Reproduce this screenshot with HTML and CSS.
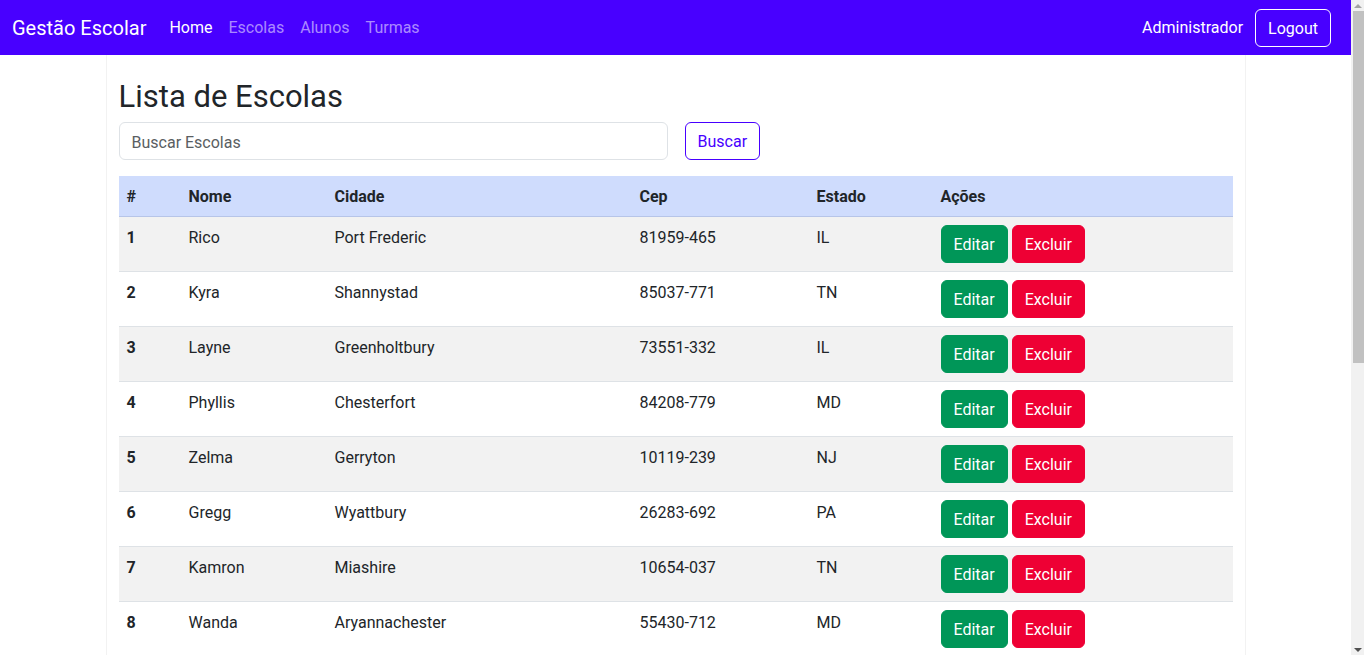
FILE: index.html
```html
<!DOCTYPE html>
<html lang="pt-BR">
<head>
<meta charset="utf-8">
<title>Gestão Escolar</title>
<link rel="stylesheet" href="styles.css">
</head>
<body>
<div class="page">
  <nav class="navbar">
    <div class="nav-left">
      <a class="brand" href="#">Gestão Escolar</a>
      <ul class="nav-links">
        <li><a class="nav-link active" href="#">Home</a></li>
        <li><a class="nav-link" href="#">Escolas</a></li>
        <li><a class="nav-link" href="#">Alunos</a></li>
        <li><a class="nav-link" href="#">Turmas</a></li>
      </ul>
    </div>
    <div class="nav-right">
      <span class="user">Administrador</span>
      <button class="btn btn-logout">Logout</button>
    </div>
  </nav>

  <main class="container">
    <h2 class="title">Lista de Escolas</h2>
    <form class="search">
      <input class="search-input" type="text" placeholder="Buscar Escolas">
      <button class="btn btn-outline" type="button">Buscar</button>
    </form>

    <table class="table">
      <thead>
        <tr>
          <th class="c-id">#</th>
          <th class="c-nome">Nome</th>
          <th class="c-cidade">Cidade</th>
          <th class="c-cep">Cep</th>
          <th class="c-estado">Estado</th>
          <th class="c-acoes">Ações</th>
        </tr>
      </thead>
      <tbody>
        <tr><th>1</th><td>Rico</td><td>Port Frederic</td><td>81959-465</td><td>IL</td><td class="actions"><button class="btn btn-success">Editar</button> <button class="btn btn-danger">Excluir</button></td></tr>
        <tr><th>2</th><td>Kyra</td><td>Shannystad</td><td>85037-771</td><td>TN</td><td class="actions"><button class="btn btn-success">Editar</button> <button class="btn btn-danger">Excluir</button></td></tr>
        <tr><th>3</th><td>Layne</td><td>Greenholtbury</td><td>73551-332</td><td>IL</td><td class="actions"><button class="btn btn-success">Editar</button> <button class="btn btn-danger">Excluir</button></td></tr>
        <tr><th>4</th><td>Phyllis</td><td>Chesterfort</td><td>84208-779</td><td>MD</td><td class="actions"><button class="btn btn-success">Editar</button> <button class="btn btn-danger">Excluir</button></td></tr>
        <tr><th>5</th><td>Zelma</td><td>Gerryton</td><td>10119-239</td><td>NJ</td><td class="actions"><button class="btn btn-success">Editar</button> <button class="btn btn-danger">Excluir</button></td></tr>
        <tr><th>6</th><td>Gregg</td><td>Wyattbury</td><td>26283-692</td><td>PA</td><td class="actions"><button class="btn btn-success">Editar</button> <button class="btn btn-danger">Excluir</button></td></tr>
        <tr><th>7</th><td>Kamron</td><td>Miashire</td><td>10654-037</td><td>TN</td><td class="actions"><button class="btn btn-success">Editar</button> <button class="btn btn-danger">Excluir</button></td></tr>
        <tr><th>8</th><td>Wanda</td><td>Aryannachester</td><td>55430-712</td><td>MD</td><td class="actions"><button class="btn btn-success">Editar</button> <button class="btn btn-danger">Excluir</button></td></tr>
      </tbody>
    </table>
  </main>
</div>

<div class="scrollbar" aria-hidden="true">
  <div class="sb-arrow sb-up"></div>
  <div class="sb-track"><div class="sb-thumb"></div></div>
  <div class="sb-arrow sb-down"></div>
</div>
</body>
</html>
```
FILE: styles.css
```css
* { box-sizing: border-box; }

html, body {
  margin: 0;
  padding: 0;
  height: 100%;
  overflow: hidden;
}

body {
  display: flex;
  font-family: Roboto, "Liberation Sans", sans-serif;
  font-size: 16px;
  line-height: 24px;
  color: #212529;
  background: #ffffff;
}

.page {
  flex: 1;
  min-width: 0;
  height: 100%;
  overflow: hidden;
}

/* Fake classic scrollbar */
.scrollbar {
  width: 13px;
  flex: none;
  height: 100%;
  background: #f1f1f1;
  display: flex;
  flex-direction: column;
}

.sb-arrow {
  height: 11px;
  flex: none;
  display: flex;
  align-items: center;
  justify-content: center;
}

.sb-up::before {
  content: "";
  border-left: 4px solid transparent;
  border-right: 4px solid transparent;
  border-bottom: 4px solid #a3a3a3;
}

.sb-down::before {
  content: "";
  border-left: 4px solid transparent;
  border-right: 4px solid transparent;
  border-top: 4px solid #505050;
}

.sb-track {
  flex: 1;
  padding-left: 2px;
}

.sb-thumb {
  height: 352px;
  background: #c1c1c1;
}

/* Navbar */
.navbar {
  height: 55px;
  background: #4800ff;
  display: flex;
  align-items: center;
  justify-content: space-between;
  padding: 0 20px 0 12px;
}

.nav-left {
  display: flex;
  align-items: center;
}

.brand {
  color: #ffffff;
  font-size: 20px;
  line-height: 30px;
  text-decoration: none;
  margin-right: 15px;
}

.nav-links {
  display: flex;
  list-style: none;
  margin: 0;
  padding: 0;
}

.nav-link {
  display: block;
  padding: 8px 8px;
  color: rgba(255, 255, 255, 0.55);
  text-decoration: none;
}

.nav-link.active {
  color: #ffffff;
}

.nav-right {
  display: flex;
  align-items: center;
  gap: 12px;
}

.user {
  color: #ffffff;
}

/* Buttons */
.btn {
  font-family: inherit;
  font-size: 16px;
  line-height: 24px;
  padding: 7px 12px 5px;
  border: 1px solid transparent;
  border-radius: 6px;
  cursor: pointer;
  background: transparent;
}

.btn-logout {
  color: #ffffff;
  border-color: #ffffff;
}

.btn-outline {
  color: #4800ff;
  border-color: #4800ff;
  background: #ffffff;
}

.btn-success {
  background: #009658;
  border-color: #009658;
  color: #ffffff;
}

.btn-danger {
  background: #ee0034;
  border-color: #ee0034;
  color: #ffffff;
}

/* Container */
.container {
  width: 1140px;
  margin: 0 auto;
  padding: 23px 12px 0;
  border-left: 1px solid #f2f2f2;
  border-right: 1px solid #f2f2f2;
}

.title {
  font-size: 31px;
  font-weight: 400;
  line-height: 38px;
  margin: 0 0 6px;
}

.search {
  display: flex;
  gap: 17px;
  margin: 0 0 16px;
}

.search-input {
  width: 549px;
  height: 38px;
  padding: 7px 12px 5px;
  font-family: inherit;
  font-size: 16px;
  border: 1px solid #dee2e6;
  border-radius: 6px;
  color: #212529;
}

.search-input::placeholder {
  color: #5a5e62;
}

/* Table */
.table {
  width: 100%;
  border-collapse: collapse;
  table-layout: fixed;
}

.table th,
.table td {
  text-align: left;
  vertical-align: top;
  padding: 9px 8px 7px;
  border-bottom: 1px solid #dee2e6;
}

.table td.actions {
  padding: 8px;
}

.table th {
  font-weight: 700;
}

.table thead th {
  background: #cfdcfd;
  border-bottom-color: #b7c5e8;
}

.table tbody tr:nth-child(odd) th,
.table tbody tr:nth-child(odd) td {
  background: #f2f2f2;
}

.c-id { width: 62px; }
.c-nome { width: 146px; }
.c-cidade { width: 305px; }
.c-cep { width: 177px; }
.c-estado { width: 124px; }
.c-acoes { width: 300px; }
```
